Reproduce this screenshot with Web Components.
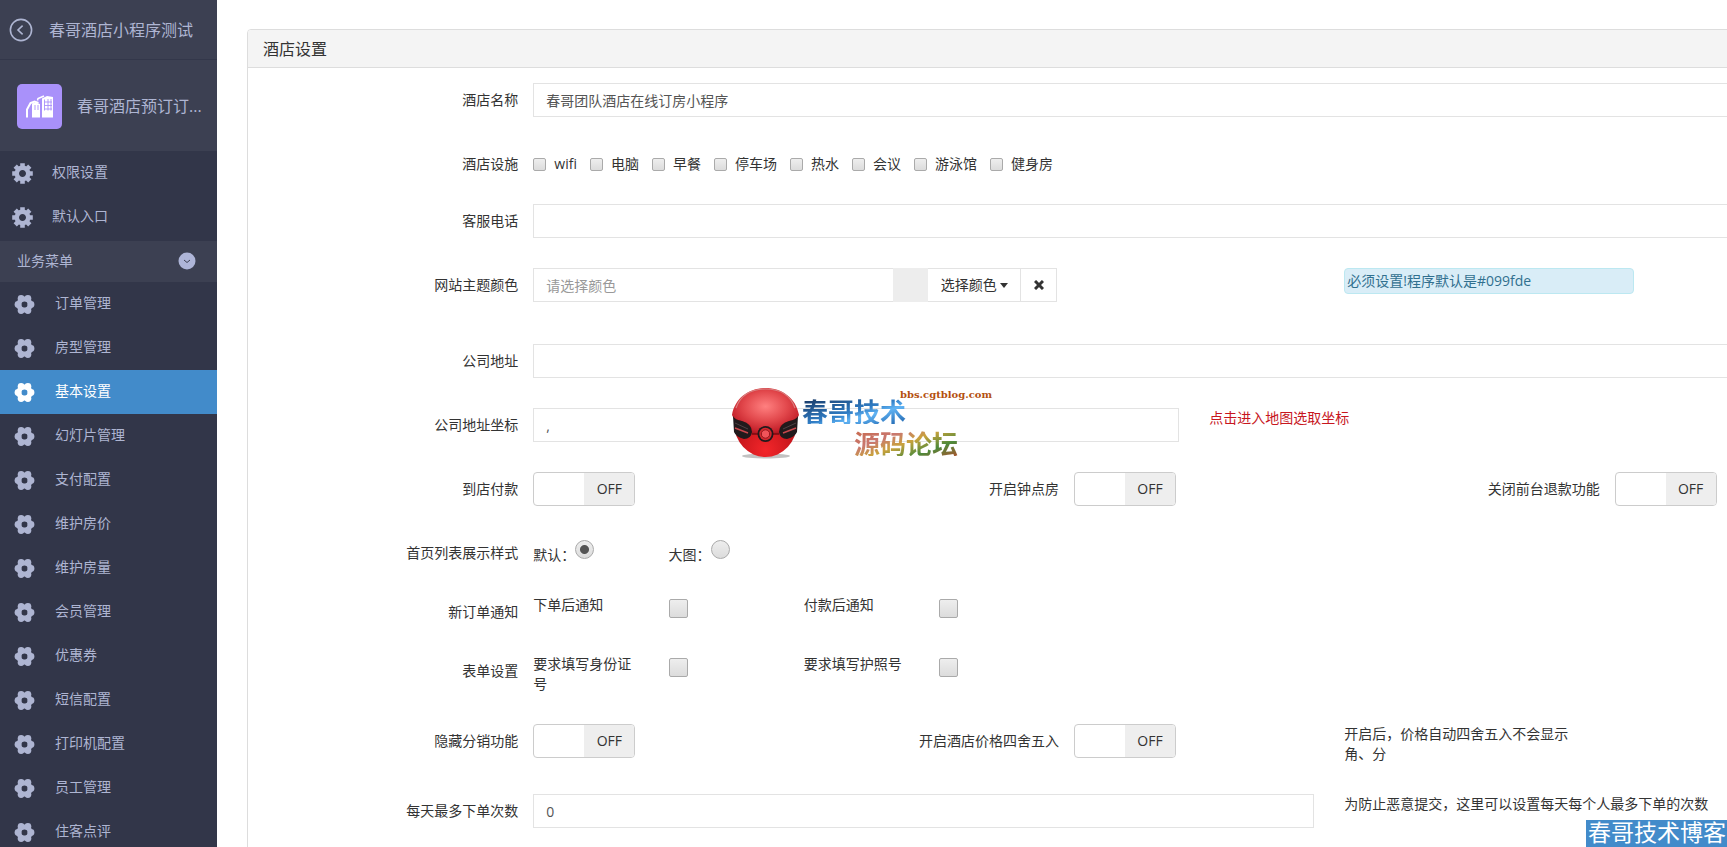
<!DOCTYPE html>
<html lang="zh-CN">
<head>
<meta charset="utf-8">
<title>酒店设置</title>
<style>
html, body { margin: 0; height: 100%; }
body { font: 14px/20px "Open Sans", "Noto Sans CJK SC", sans-serif; color: #333; background: #fff; }
</style>
</head>
<body>
<hotel-app></hotel-app>

<template id="hotel-app">
<style>
:host { display: flex; position: relative; height: 100vh; overflow: hidden; }
main { flex: 1; min-width: 0; overflow: hidden; padding: 29px 0 0 30px; }
brand-logo { position: absolute; left: 726px; top: 382px; }
.corner { position: absolute; right: 0; bottom: 0; padding: 0 1px 0 2px; background: #428bca; color: #fff; font: 23px/27px "Liberation Sans", "Noto Sans CJK SC", sans-serif; white-space: nowrap; }
</style>
<side-bar></side-bar>
<main>
  <settings-panel heading="酒店设置"><settings-form></settings-form></settings-panel>
</main>
<brand-logo></brand-logo>
<div class="corner">春哥技术博客</div>
</template>

<template id="side-bar">
<style>
:host { display: block; flex: 0 0 217px; overflow: hidden; background: #323649; color: #aeb5d2; }
a { color: inherit; text-decoration: none; }
.top { display: flex; align-items: center; gap: 16px; height: 60px; padding-left: 9px; box-sizing: border-box; background: #3c4052; border-bottom: 1px solid #33374a; font-size: 16px; }
.top svg { width: 24px; height: 24px; }
.app { display: flex; align-items: center; gap: 15px; height: 91px; padding: 2px 14px 0 17px; box-sizing: border-box; background: #3c4052; font-size: 16px; white-space: nowrap; }
.app svg { flex: none; width: 45px; height: 45px; }
.app span { padding-bottom: 2px; }
.group { display: flex; align-items: center; justify-content: space-between; box-sizing: border-box; width: 100%; height: 41px; margin: 2px 0 0; padding: 0 21px 2px 17px; border: 0; background: #3c4052; color: inherit; font: inherit; }
.group svg { width: 18px; height: 18px; }
nav { display: block; }
</style>
<a class="top" href="#back">
  <svg viewBox="0 0 24 24" fill="none" stroke="currentColor" stroke-width="1.6"><circle cx="12" cy="12" r="10.6"/><path d="M13.6 7.6 9 12l4.600 4.400"/></svg>
  <span>春哥酒店小程序测试</span>
</a>
<div class="app">
  <svg viewBox="0 0 45 45"><rect width="45" height="45" rx="5" fill="#a991fa"/>
    <path d="M25 14.500 30 12l6 1V33.500H25zM15 19.500l3-1 5 1.500V33.500H15z" fill="#fff"/>
    <path d="M10 33.500V25.500l3.500-6.500 4-1.500 4 1.500" fill="none" stroke="#fff" stroke-width="2"/>
    <path d="M20.500 16.500 21 14.500 27 12" fill="none" stroke="#fff" stroke-width="1.500"/>
    <path d="M27.500 15.500v11M31 15v11.500M34 15v11.500M27 18h8M27 21.500h8M27 25h8M18 21v5M21 21v5" stroke="#a991fa" stroke-width=".9" fill="none"/>
  </svg>
  <span>春哥酒店预订订...</span>
</div>
<nav aria-label="系统">
  <side-item cog>权限设置</side-item>
  <side-item cog>默认入口</side-item>
</nav>
<button class="group" type="button"><span>业务菜单</span>
  <svg viewBox="0 0 18 18"><circle cx="9" cy="9" r="8.500" fill="#aeb5d8"/><path d="m6 8 3 2.500L12 8" fill="none" stroke="#3c4052"/></svg>
</button>
<nav aria-label="业务菜单">
  <side-item>订单管理</side-item>
  <side-item>房型管理</side-item>
  <side-item active>基本设置</side-item>
  <side-item>幻灯片管理</side-item>
  <side-item>支付配置</side-item>
  <side-item>维护房价</side-item>
  <side-item>维护房量</side-item>
  <side-item>会员管理</side-item>
  <side-item>优惠券</side-item>
  <side-item>短信配置</side-item>
  <side-item>打印机配置</side-item>
  <side-item>员工管理</side-item>
  <side-item>住客点评</side-item>
</nav>
</template>

<template id="side-item">
<style>
:host { display: block; }
a { display: flex; align-items: center; gap: 20px; height: 44px; padding-left: 14px; color: inherit; text-decoration: none; }
span { padding-bottom: 2px; }
svg { width: 21px; height: 21px; }
.cog { display: none; }
:host([cog]) .cog { display: block; }
:host([cog]) .flower { display: none; }
:host([cog]) a { padding-left: 12px; gap: 19px; }
:host([active]) a { background: #428bca; color: #fff; }
</style>
<a href="#menu">
  <svg class="cog" viewBox="-10.500 -10.500 21 21">
    <g stroke="currentColor" stroke-width="4.600" stroke-linecap="butt"><path d="M0-10.300V-6M0 10.300V6M-10.300 0H-6M10.300 0H6M-7.300-7.300l3 3M7.300 7.300l-3-3M7.300-7.300l-3 3M-7.300 7.300l3-3"/></g>
    <circle r="5.700" fill="none" stroke="currentColor" stroke-width="4.400"/>
  </svg>
  <svg class="flower" viewBox="-10.500 -10.500 21 21">
    <circle r="5.600" fill="none" stroke="currentColor" stroke-width="5"/>
    <g fill="currentColor"><circle cx="6.500" r="3.400"/><circle cx="-6.500" r="3.400"/><circle cx="3.400" cy="-6" r="3.400"/><circle cx="-3.400" cy="-6" r="3.400"/><circle cx="3.400" cy="6" r="3.400"/><circle cx="-3.400" cy="6" r="3.400"/></g>
  </svg>
  <span><slot></slot></span>
</a>
</template>

<template id="settings-panel">
<style>
:host { display: block; margin-right: -144px; border: 1px solid #ddd; border-radius: 4px; }
h1 { margin: 0; padding: 9px 15px 7px; background: #f4f4f4; border-bottom: 1px solid #ddd; border-radius: 3px 3px 0 0; font-size: 16px; line-height: 21px; font-weight: 400; }
.body { padding: 15px 0; }
</style>
<h1></h1>
<div class="body"><slot></slot></div>
</template>

<template id="settings-form">
<style>
:host { display: block; }
.row { display: grid; grid-template-columns: repeat(12, minmax(0, 1fr)); margin-bottom: 30px; }
.row > * { margin: 0 15px; }
.row > .label { grid-column: span 2; margin: 0; padding-top: 7px; text-align: right; }
.s1 { grid-column: span 1; }
.s2 { grid-column: span 2; }
.s4 { grid-column: span 4; }
.s5 { grid-column: span 5; }
.s6 { grid-column: span 6; }
.s10 { grid-column: span 10; }
.short { height: 29px; }
.mid { height: 27px; }
p { margin: 0; }
a { color: #c7161e; text-decoration: none; }
input[type=text] { box-sizing: border-box; width: auto; min-width: 0; height: 34px; padding: 6px 12px; border: 1px solid #e3e3e3; border-radius: 0; background: #fff; color: #555; font: inherit; }
input::placeholder { color: #999; opacity: 1; }
.options { display: flex; gap: 13px; padding-top: 7px; }
.color { display: flex; max-width: 524px; height: 34px; }
.color input { flex: 1; border-right: 0; }
.swatch { width: 35px; background: #ededed; }
.color button { display: flex; align-items: center; justify-content: center; gap: 3px; padding: 0; border: 1px solid #e3e3e3; background: #fff; color: #333; font: inherit; }
.pick { width: 93px; border-left: 0 !important; }
.clear { width: 36px; border-left: 0 !important; }
.caret { border: 4px solid transparent; border-top: 5px solid #333; border-bottom: 0; }
.row > .tip { box-sizing: border-box; width: 290px; height: 26px; margin-bottom: 20px; padding: 2px; border: 1px solid #bce8f1; border-radius: 4px; background: #d9edf7; color: #31708f; }
.radio { display: flex; }
.radio label { padding-top: 9px; white-space: nowrap; }
.radio input { appearance: none; flex: none; width: 19px; height: 19px; margin: 4px 0; border: 1px solid #aaa; border-radius: 50%; background: linear-gradient(#eee, #dcdcdc); }
.radio input:checked { background: radial-gradient(circle, #555 0 4px, transparent 5px), linear-gradient(#eee, #dcdcdc); }
.row > .box { appearance: none; box-sizing: border-box; width: 19px; height: 19px; margin-top: 4px; border: 1px solid #aaa; border-radius: 2px; background: linear-gradient(#eee, #dcdcdc); }
.row > .box:checked { background: #666; }
</style>
<form>
  <div class="row"><label class="label" for="name">酒店名称</label><input class="s10" type="text" id="name" value="春哥团队酒店在线订房小程序"></div>
  <div class="row mid"><span class="label" id="fac">酒店设施</span>
    <div class="s10 options" role="group" aria-labelledby="fac">
      <check-option>wifi</check-option><check-option>电脑</check-option><check-option>早餐</check-option><check-option>停车场</check-option><check-option>热水</check-option><check-option>会议</check-option><check-option>游泳馆</check-option><check-option>健身房</check-option>
    </div></div>
  <div class="row"><label class="label" for="tel">客服电话</label><input class="s10" type="text" id="tel"></div>
  <div class="row"><label class="label" for="color">网站主题颜色</label>
    <div class="s6 color"><input type="text" id="color" placeholder="请选择颜色"><span class="swatch"></span><button type="button" class="pick">选择颜色<span class="caret"></span></button><button type="button" class="clear" aria-label="清除"><svg width="10" height="10" viewBox="0 0 10 10" stroke="#333" stroke-width="3"><path d="m1 1 8 8M9 1 1 9"/></svg></button></div>
    <p class="s4 tip">必须设置!程序默认是#099fde</p></div>
  <div class="row"><label class="label" for="addr">公司地址</label><input class="s10" type="text" id="addr"></div>
  <div class="row"><label class="label" for="geo">公司地址坐标</label><input class="s5" type="text" id="geo" value=","><p class="s4"><a href="#map">点击进入地图选取坐标</a></p></div>
  <div class="row">
    <span class="label">到店付款</span><toggle-switch class="s2" label="到店付款"></toggle-switch>
    <span class="label">开启钟点房</span><toggle-switch class="s2" label="开启钟点房"></toggle-switch>
    <span class="label">关闭前台退款功能</span><toggle-switch class="s2" label="关闭前台退款功能"></toggle-switch>
  </div>
  <div class="row short"><span class="label">首页列表展示样式</span>
    <div class="s1 radio"><label for="r1">默认：</label><input type="radio" name="style" id="r1" checked></div>
    <div class="s1 radio"><label for="r2">大图：</label><input type="radio" name="style" id="r2"></div></div>
  <div class="row short"><span class="label">新订单通知</span>
    <label class="s1" for="c1">下单后通知</label><input class="box" type="checkbox" id="c1">
    <label class="s1" for="c2">付款后通知</label><input class="box" type="checkbox" id="c2"></div>
  <div class="row"><span class="label">表单设置</span>
    <label class="s1" for="c3">要求填写身份证号</label><input class="box" type="checkbox" id="c3">
    <label class="s1" for="c4">要求填写护照号</label><input class="box" type="checkbox" id="c4"></div>
  <div class="row">
    <span class="label">隐藏分销功能</span><toggle-switch class="s2" label="隐藏分销功能"></toggle-switch>
    <span class="label">开启酒店价格四舍五入</span><toggle-switch class="s2" label="开启酒店价格四舍五入"></toggle-switch>
    <p class="s2">开启后，价格自动四舍五入不会显示角、分</p></div>
  <div class="row"><label class="label" for="max">每天最多下单次数</label><input class="s6" type="text" id="max" value="0"><p class="s4">为防止恶意提交，这里可以设置每天每个人最多下单的次数</p></div>
</form>
</template>

<template id="check-option">
<style>
:host { display: block; }
label { display: flex; align-items: center; gap: 8px; white-space: nowrap; }
input { appearance: none; box-sizing: border-box; width: 13px; height: 13px; margin: 0; border: 1px solid #aaa; border-radius: 2px; background: linear-gradient(#eee, #dcdcdc); }
input:checked { background: #666; }
</style>
<label><input type="checkbox"><span><slot></slot></span></label>
</template>

<template id="toggle-switch">
<style>
:host { display: block; }
label { display: flex; box-sizing: border-box; width: 102px; height: 34px; border: 1px solid #ccc; border-radius: 4px; overflow: hidden; background: #fff; }
input { appearance: none; flex: 1; margin: 0; }
span { flex: 1; background: #eee; line-height: 32px; text-align: center; }
</style>
<label><input type="checkbox" role="switch"><span>OFF</span></label>
</template>

<template id="brand-logo">
<style>
:host { display: flex; pointer-events: none; font-family: "Noto Sans CJK SC", sans-serif; font-weight: 700; }
svg { flex: none; width: 76px; height: 82px; overflow: visible; }
.words { padding-top: 16px; font-size: 26px; line-height: 26px; white-space: nowrap; }
.words div { background-clip: text; -webkit-background-clip: text; color: transparent; }
.one { width: 104px; background-image: linear-gradient(165deg, #17345f, #2f7cc4 50%, #61b4f4 65%, #1d62ac); }
.two { width: 104px; margin: 6px 0 0 52px; background-image: linear-gradient(160deg, #c8694c, #c97870 30%, #c9a23d 50%, #4d8a3a 75%, #a8552e); }
.url { position: absolute; left: 174px; top: 6px; font: 700 10px/14px "DejaVu Serif", serif; color: #b4500f; }
</style>
<svg viewBox="0 0 76 82" aria-hidden="true">
  <defs>
    <radialGradient id="ball" cx=".5" cy=".4" r=".65"><stop offset="0" stop-color="#ff8080"/><stop offset=".5" stop-color="#e2484c"/><stop offset=".85" stop-color="#c4202a"/><stop offset="1" stop-color="#9c1018"/></radialGradient>
    <radialGradient id="low" cx=".5" cy=".9" r=".8"><stop offset="0" stop-color="#f3262a"/><stop offset="1" stop-color="#a50b12"/></radialGradient>
  </defs>
  <ellipse cx="40" cy="74" rx="24" ry="2.500" fill="#999" opacity=".6"/>
  <ellipse cx="39.500" cy="41" rx="31.500" ry="34" fill="url(#low)"/>
  <path d="M6 33C9 16 23 6 39.500 6S70 16 73 33L71 37Q60 39 54 44L53 52H26L25 44Q19 39 8 37z" fill="url(#ball)"/>
  <path d="M10 26C15 12 26 7 39.500 7S64 12 69 26" fill="none" stroke="#d98080" stroke-width="1.200"/>
  <path d="M7 34Q9 38 16 39 26 42 26 50 25 57 18 57 10 55 8 50zM72 34Q70 38 63 39 53 42 53 50 54 57 61 57 69 55 71 50z" fill="#211a1c"/>
  <path d="M9 46 22 51M70 46 57 51" fill="none" stroke="#c8484c" stroke-width="1.500"/>
  <path d="M9 41 22 47M70 41 57 47" fill="none" stroke="#4d4244"/>
  <path d="M26 52h27" stroke="#7c0a10" stroke-width="1.500"/>
  <circle cx="39.500" cy="52" r="8" fill="#211a1c"/><circle cx="39.500" cy="52" r="6.200" fill="#d42a30"/><circle cx="39.500" cy="52" r="4.200" fill="#f0545a" stroke="#93151a"/>
</svg>
<div class="words"><div class="one">春哥技术</div><div class="two">源码论坛</div></div>
<span class="url">bbs.cgtblog.com</span>
</template>

<script>
class TemplateElement extends HTMLElement {
  constructor() {
    super();
    const template = document.getElementById(this.localName);
    this.attachShadow({ mode: 'open' }).append(template.content.cloneNode(true));
  }
}
class SettingsPanel extends TemplateElement {
  connectedCallback() { this.shadowRoot.querySelector('h1').textContent = this.getAttribute('heading'); }
}
class ToggleSwitch extends TemplateElement {
  connectedCallback() { this.shadowRoot.querySelector('input').setAttribute('aria-label', this.getAttribute('label')); }
}
customElements.define('side-item', class extends TemplateElement {});
customElements.define('side-bar', class extends TemplateElement {});
customElements.define('check-option', class extends TemplateElement {});
customElements.define('toggle-switch', ToggleSwitch);
customElements.define('settings-form', class extends TemplateElement {});
customElements.define('settings-panel', SettingsPanel);
customElements.define('brand-logo', class extends TemplateElement {});
customElements.define('hotel-app', class extends TemplateElement {});
</script>
</body>
</html>
